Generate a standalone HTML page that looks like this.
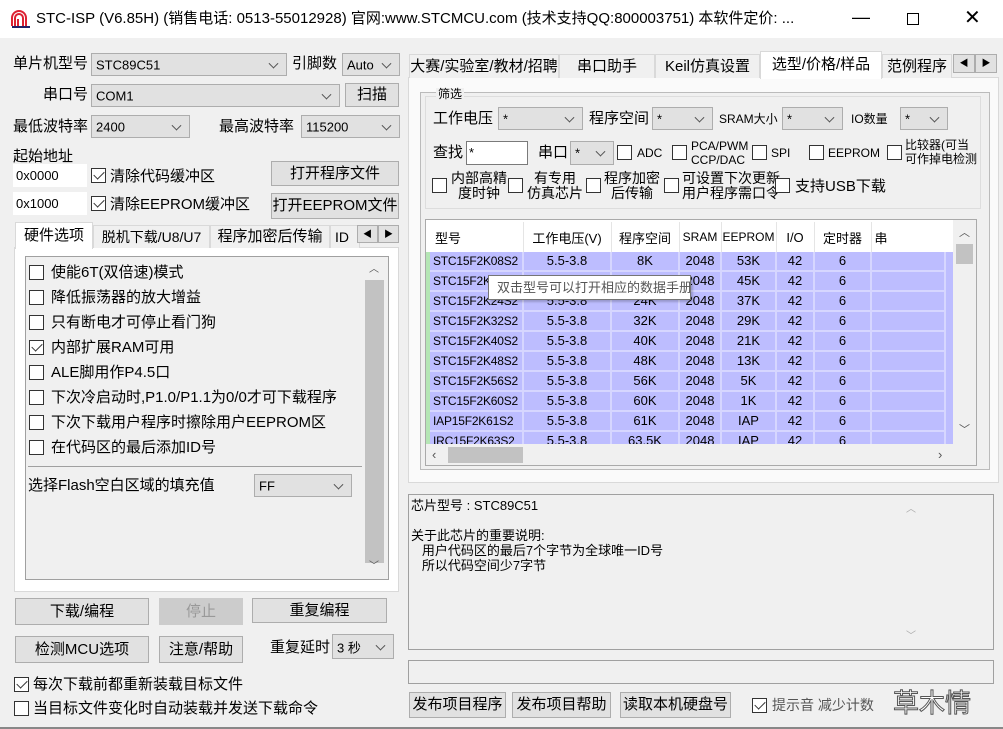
<!DOCTYPE html>
<html><head><meta charset="utf-8"><style>
*{box-sizing:border-box;margin:0;padding:0}
body{width:1003px;height:729px;overflow:hidden;background:#f0f0f0;font-family:"Liberation Sans","Noto Sans CJK SC",sans-serif;font-size:14px;color:#000;position:relative}
.a{position:absolute;white-space:nowrap}
.t{position:absolute;white-space:nowrap;line-height:1;font-size:15px}
.cb{position:absolute;background:#e1e1e1;border:1px solid #adadad}
.cb::after{content:"";position:absolute;right:9px;top:50%;width:6px;height:6px;border-right:1px solid #555;border-bottom:1px solid #555;transform:translateY(-70%) rotate(45deg)}
.cb span{position:absolute;left:4px;top:50%;transform:translateY(-50%);font-size:13px}
.btn{position:absolute;background:#e1e1e1;border:1px solid #adadad;text-align:center;font-size:15px}
.chk{position:absolute;width:15px;height:15px;border:1px solid #333;background:#fff}
.chk.on::after{content:"";position:absolute;left:4px;top:0px;width:5px;height:9px;border-right:1.5px solid #333;border-bottom:1.5px solid #333;transform:rotate(45deg)}
.inp{position:absolute;background:#fff;border:1px solid #7a7a7a;font-size:13px;padding-left:2px}
.tab{position:absolute;border:1px solid #d9d9d9;border-bottom:none;background:#f0f0f0;text-align:center;font-size:14px}
.tab.on{background:#fff}
.sm{font-size:12px}
table{border-collapse:collapse;table-layout:fixed}
td{overflow:hidden;white-space:nowrap}
.rows td{text-align:center;border-right:2px solid #d6d6ff;border-bottom:2px solid #d6d6ff}
.rows td:first-child{text-align:left;padding-left:3px;font-size:12px;letter-spacing:-0.2px}
</style></head><body>
<!-- title -->
<div class="a" style="left:0;top:0;width:1003px;height:38px;background:#fff"></div>
<svg class="a" style="left:11px;top:10px" width="20" height="18" viewBox="0 0 20 18"><path d="M1 16V8a7 7 0 0 1 14 0v8M4 16V8a4 4 0 0 1 8 0v8M7 16V9" stroke="#d23" stroke-width="2" fill="none"/><path d="M1 17h18" stroke="#226" stroke-width="2"/></svg>
<div class="t" style="left:36px;top:11px;font-size:15px">STC-ISP (V6.85H) (销售电话: 0513-55012928) 官网:www.STCMCU.com  (技术支持QQ:800003751) 本软件定价: ...</div>
<div class="t" style="left:852px;top:8px;font-size:18px">—</div>
<div class="a" style="left:907px;top:13px;width:12px;height:12px;border:1px solid #000"></div>
<div class="t" style="left:964px;top:8px;font-size:20px">✕</div>

<!-- left top -->
<div class="t" style="left:13px;top:56px">单片机型号</div>
<div class="cb" style="left:91px;top:53px;width:196px;height:23px"><span>STC89C51</span></div>
<div class="t" style="left:292px;top:56px">引脚数</div>
<div class="cb" style="left:342px;top:53px;width:58px;height:23px"><span>Auto</span></div>
<div class="t" style="left:43px;top:87px">串口号</div>
<div class="cb" style="left:91px;top:84px;width:249px;height:23px"><span>COM1</span></div>
<div class="btn" style="left:345px;top:83px;width:54px;height:24px;line-height:22px">扫描</div>
<div class="t" style="left:13px;top:119px">最低波特率</div>
<div class="cb" style="left:91px;top:115px;width:99px;height:23px"><span>2400</span></div>
<div class="t" style="left:219px;top:119px">最高波特率</div>
<div class="cb" style="left:301px;top:115px;width:99px;height:23px"><span>115200</span></div>
<div class="t" style="left:13px;top:149px">起始地址</div>
<div class="inp" style="left:13px;top:164px;width:74px;height:23px;line-height:21px;border-color:#fff">0x0000</div>
<div class="chk on" style="left:91px;top:168px"></div><div class="t" style="left:110px;top:169px">清除代码缓冲区</div>
<div class="btn" style="left:271px;top:161px;width:128px;height:25px;line-height:23px">打开程序文件</div>
<div class="inp" style="left:13px;top:192px;width:74px;height:23px;line-height:21px;border-color:#fff">0x1000</div>
<div class="chk on" style="left:91px;top:196px"></div><div class="t" style="left:110px;top:197px">清除EEPROM缓冲区</div>
<div class="btn" style="left:271px;top:193px;width:128px;height:26px;line-height:24px">打开EEPROM文件</div>

<!-- left tabs -->
<div class="a" style="left:14px;top:247px;width:385px;height:345px;background:#fff;border:1px solid #d9d9d9"></div>
<div class="tab on" style="left:15px;top:222px;width:78px;height:27px;line-height:26px;font-size:15px">硬件选项</div>
<div class="tab" style="left:93px;top:225px;width:117px;height:23px;line-height:22px">脱机下载/U8/U7</div>
<div class="tab" style="left:210px;top:225px;width:120px;height:23px;line-height:22px;font-size:15px">程序加密后传输</div>
<div class="tab" style="left:330px;top:225px;width:30px;height:23px;line-height:22px;overflow:hidden;text-align:left;padding-left:4px">ID号</div>
<div class="btn" style="left:357px;top:225px;width:21px;height:18px;font-size:9px;line-height:16px">◀</div>
<div class="btn" style="left:378px;top:225px;width:21px;height:18px;font-size:9px;line-height:16px">▶</div>
<div class="a" style="left:25px;top:256px;width:364px;height:324px;background:#f0f0f0;border:1px solid #a0a0a0"></div>
<div class="a" style="left:365px;top:280px;width:19px;height:283px;background:#c2c2c2"></div>
<div class="t" style="left:369px;top:265px;font-size:10px;color:#555">︿</div>
<div class="t" style="left:369px;top:562px;font-size:10px;color:#555">﹀</div>
<div class="chk" style="left:29px;top:265px"></div><div class="t" style="left:51px;top:265px">使能6T(双倍速)模式</div>
<div class="chk" style="left:29px;top:290px"></div><div class="t" style="left:51px;top:290px">降低振荡器的放大增益</div>
<div class="chk" style="left:29px;top:315px"></div><div class="t" style="left:51px;top:315px">只有断电才可停止看门狗</div>
<div class="chk on" style="left:29px;top:340px"></div><div class="t" style="left:51px;top:340px">内部扩展RAM可用</div>
<div class="chk" style="left:29px;top:365px"></div><div class="t" style="left:51px;top:365px">ALE脚用作P4.5口</div>
<div class="chk" style="left:29px;top:390px"></div><div class="t" style="left:51px;top:390px">下次冷启动时,P1.0/P1.1为0/0才可下载程序</div>
<div class="chk" style="left:29px;top:415px"></div><div class="t" style="left:51px;top:415px">下次下载用户程序时擦除用户EEPROM区</div>
<div class="chk" style="left:29px;top:440px"></div><div class="t" style="left:51px;top:440px">在代码区的最后添加ID号</div>
<div class="a" style="left:28px;top:466px;width:334px;height:1px;background:#a0a0a0"></div>
<div class="t" style="left:28px;top:478px">选择Flash空白区域的填充值</div>
<div class="cb" style="left:254px;top:474px;width:98px;height:23px"><span>FF</span></div>

<!-- left buttons -->
<div class="btn" style="left:15px;top:598px;width:134px;height:27px;line-height:25px">下载/编程</div>
<div class="btn" style="left:159px;top:598px;width:84px;height:27px;line-height:25px;background:#ccc;border-color:#ccc;color:#999">停止</div>
<div class="btn" style="left:252px;top:598px;width:135px;height:25px;line-height:23px">重复编程</div>
<div class="btn" style="left:15px;top:636px;width:134px;height:27px;line-height:25px">检测MCU选项</div>
<div class="btn" style="left:159px;top:636px;width:84px;height:27px;line-height:25px">注意/帮助</div>
<div class="t" style="left:270px;top:640px">重复延时</div>
<div class="cb" style="left:332px;top:634px;width:62px;height:25px"><span>3 秒</span></div>
<div class="chk on" style="left:14px;top:677px"></div><div class="t" style="left:33px;top:677px">每次下载前都重新装载目标文件</div>
<div class="chk" style="left:14px;top:701px"></div><div class="t" style="left:33px;top:701px">当目标文件变化时自动装载并发送下载命令</div>

<!-- right tabs -->
<div class="a" style="left:408px;top:77px;width:591px;height:406px;background:#fafafa;border:1px solid #d9d9d9"></div>
<div class="tab" style="left:409px;top:54px;width:150px;height:24px;line-height:24px;font-size:15px">大赛/实验室/教材/招聘</div>
<div class="tab" style="left:559px;top:54px;width:96px;height:24px;line-height:24px;font-size:15px">串口助手</div>
<div class="tab" style="left:655px;top:54px;width:105px;height:24px;line-height:24px;font-size:15px">Keil仿真设置</div>
<div class="tab on" style="left:760px;top:51px;width:122px;height:28px;line-height:26px;font-size:15px">选型/价格/样品</div>
<div class="tab" style="left:882px;top:54px;width:70px;height:24px;line-height:24px;font-size:15px;overflow:hidden">范例程序</div>
<div class="btn" style="left:953px;top:54px;width:22px;height:19px;font-size:9px;line-height:17px">◀</div>
<div class="btn" style="left:975px;top:54px;width:22px;height:19px;font-size:9px;line-height:17px">▶</div>
<div class="a" style="left:420px;top:92px;width:570px;height:378px;border:1px solid #bbb;background:#f0f0f0"></div>
<div class="a" style="left:425px;top:96px;width:556px;height:113px;border:1px solid #ddd"></div>
<div class="t" style="left:436px;top:88px;font-size:12px;background:#f0f0f0;padding:0 2px">筛选</div>
<div class="t" style="left:433px;top:111px;font-size:15px">工作电压</div>
<div class="cb" style="left:498px;top:107px;width:85px;height:23px"><span>*</span></div>
<div class="t" style="left:589px;top:111px;font-size:15px">程序空间</div>
<div class="cb" style="left:652px;top:107px;width:61px;height:23px"><span>*</span></div>
<div class="t sm" style="left:719px;top:113px;font-size:12px">SRAM大小</div>
<div class="cb" style="left:782px;top:107px;width:61px;height:23px"><span>*</span></div>
<div class="t sm" style="left:851px;top:113px;font-size:12px">IO数量</div>
<div class="cb" style="left:900px;top:107px;width:48px;height:23px"><span>*</span></div>
<div class="t" style="left:433px;top:145px;font-size:15px">查找</div>
<div class="inp" style="left:466px;top:141px;width:62px;height:24px;line-height:22px">*</div>
<div class="t" style="left:538px;top:145px;font-size:15px">串口</div>
<div class="cb" style="left:570px;top:141px;width:44px;height:24px"><span>*</span></div>
<div class="chk" style="left:617px;top:145px"></div><div class="t sm" style="left:637px;top:147px;font-size:12px">ADC</div>
<div class="chk" style="left:672px;top:145px"></div><div class="a sm" style="left:691px;top:139px;line-height:14px">PCA/PWM<br>CCP/DAC</div>
<div class="chk" style="left:752px;top:145px"></div><div class="t sm" style="left:771px;top:147px;font-size:12px">SPI</div>
<div class="chk" style="left:809px;top:145px"></div><div class="t sm" style="left:828px;top:147px;font-size:12px">EEPROM</div>
<div class="chk" style="left:887px;top:145px"></div><div class="a sm" style="left:905px;top:138px;line-height:14px;width:80px;overflow:hidden">比较器(可当<br>可作掉电检测</div>
<div class="chk" style="left:432px;top:178px"></div><div class="a" style="left:451px;top:171px;line-height:15px;text-align:center;font-size:14px">内部高精<br>度时钟</div>
<div class="chk" style="left:508px;top:178px"></div><div class="a" style="left:527px;top:171px;line-height:15px;text-align:center;font-size:14px">有专用<br>仿真芯片</div>
<div class="chk" style="left:586px;top:178px"></div><div class="a" style="left:604px;top:171px;line-height:15px;text-align:center;font-size:14px">程序加密<br>后传输</div>
<div class="chk" style="left:664px;top:178px"></div><div class="a" style="left:682px;top:171px;line-height:15px;text-align:center;font-size:14px">可设置下次更新<br>用户程序需口令</div>
<div class="chk" style="left:775px;top:178px"></div><div class="t" style="left:795px;top:179px">支持USB下载</div>

<!-- list -->
<div class="a" style="left:425px;top:219px;width:552px;height:247px;border:1px solid #aaa;background:#fff;overflow:hidden">
<table style="position:absolute;left:4px;top:2px;font-size:13px;width:515px">
<colgroup><col style="width:93px"><col style="width:88px"><col style="width:68px"><col style="width:42px"><col style="width:55px"><col style="width:38px"><col style="width:57px"><col style="width:74px"></colgroup>
<tr style="height:30px;background:#fff"><td style="padding-left:5px">型号</td><td style="text-align:center;border-left:1px solid #e5e5e5">工作电压(V)</td><td style="text-align:center;border-left:1px solid #e5e5e5">程序空间</td><td style="text-align:center;border-left:1px solid #e5e5e5;font-size:12px">SRAM</td><td style="text-align:center;border-left:1px solid #e5e5e5;font-size:12px">EEPROM</td><td style="text-align:center;border-left:1px solid #e5e5e5">I/O</td><td style="text-align:center;border-left:1px solid #e5e5e5">定时器</td><td style="border-left:1px solid #e5e5e5;padding-left:3px">串</td></tr>
</table>
<div class="a" style="left:4px;top:32px;width:523px;height:192px;background:#bdbdff"></div>
<div class="a" style="left:0;top:32px;width:4px;height:192px;background:#b5e6b5"></div>
<table class="rows" style="position:absolute;left:4px;top:32px;font-size:13px;width:515px;line-height:18px">
<colgroup><col style="width:93px"><col style="width:88px"><col style="width:68px"><col style="width:42px"><col style="width:55px"><col style="width:38px"><col style="width:57px"><col style="width:74px"></colgroup>
<tr><td>STC15F2K08S2</td><td>5.5-3.8</td><td>8K</td><td>2048</td><td>53K</td><td>42</td><td>6</td><td></td></tr>
<tr><td>STC15F2K16S2</td><td>5.5-3.8</td><td>16K</td><td>2048</td><td>45K</td><td>42</td><td>6</td><td></td></tr>
<tr><td>STC15F2K24S2</td><td>5.5-3.8</td><td>24K</td><td>2048</td><td>37K</td><td>42</td><td>6</td><td></td></tr>
<tr><td>STC15F2K32S2</td><td>5.5-3.8</td><td>32K</td><td>2048</td><td>29K</td><td>42</td><td>6</td><td></td></tr>
<tr><td>STC15F2K40S2</td><td>5.5-3.8</td><td>40K</td><td>2048</td><td>21K</td><td>42</td><td>6</td><td></td></tr>
<tr><td>STC15F2K48S2</td><td>5.5-3.8</td><td>48K</td><td>2048</td><td>13K</td><td>42</td><td>6</td><td></td></tr>
<tr><td>STC15F2K56S2</td><td>5.5-3.8</td><td>56K</td><td>2048</td><td>5K</td><td>42</td><td>6</td><td></td></tr>
<tr><td>STC15F2K60S2</td><td>5.5-3.8</td><td>60K</td><td>2048</td><td>1K</td><td>42</td><td>6</td><td></td></tr>
<tr><td>IAP15F2K61S2</td><td>5.5-3.8</td><td>61K</td><td>2048</td><td>IAP</td><td>42</td><td>6</td><td></td></tr>
<tr><td>IRC15F2K63S2</td><td>5.5-3.8</td><td>63.5K</td><td>2048</td><td>IAP</td><td>42</td><td>6</td><td></td></tr>
</table>
<div class="a" style="left:527px;top:0;width:24px;height:224px;background:#f0f0f0"></div>
<div class="a" style="left:530px;top:24px;width:17px;height:20px;background:#c2c2c2"></div>
<div class="t" style="left:533px;top:8px;font-size:11px;color:#555">︿</div>
<div class="t" style="left:533px;top:205px;font-size:11px;color:#555">﹀</div>
<div class="a" style="left:0;top:224px;width:551px;height:22px;background:#f0f0f0"></div>
<div class="a" style="left:22px;top:227px;width:75px;height:16px;background:#c2c2c2"></div>
<div class="t" style="left:6px;top:228px;font-size:13px;color:#555">‹</div>
<div class="t" style="left:512px;top:228px;font-size:13px;color:#555">›</div>
</div>
<div class="a" style="left:488px;top:275px;width:203px;height:25px;background:#fff;border:1px solid #767676;box-shadow:2px 2px 2px rgba(0,0,0,.2);font-size:13px;line-height:23px;padding-left:8px;color:#555;overflow:hidden">双击型号可以打开相应的数据手册</div>

<!-- info -->
<div class="a" style="left:408px;top:494px;width:586px;height:156px;border:1px solid #a0a0a0;background:#f0f0f0"></div>
<div class="a" style="left:411px;top:498px;font-size:13px;line-height:15px;white-space:pre">芯片型号 : STC89C51

关于此芯片的重要说明:
   用户代码区的最后7个字节为全球唯一ID号
   所以代码空间少7字节</div>
<div class="t" style="left:906px;top:505px;font-size:10px;color:#aaa">︿</div>
<div class="t" style="left:906px;top:632px;font-size:10px;color:#aaa">﹀</div>
<div class="a" style="left:408px;top:660px;width:586px;height:24px;border:1px solid #a0a0a0;background:#f0f0f0"></div>
<div class="btn" style="left:409px;top:692px;width:97px;height:26px;line-height:24px">发布项目程序</div>
<div class="btn" style="left:512px;top:692px;width:99px;height:26px;line-height:24px">发布项目帮助</div>
<div class="btn" style="left:620px;top:692px;width:111px;height:26px;line-height:24px">读取本机硬盘号</div>
<div class="chk on" style="left:752px;top:698px"></div>
<div class="t" style="left:772px;top:698px;color:#555;font-size:14px">提示音  减少计数</div>
<div class="t" style="left:893px;top:690px;font-size:26px;color:#fff;-webkit-text-stroke:1px #555">草木情</div>
<div class="a" style="left:0;top:727px;width:1003px;height:2px;background:#888"></div>
</body></html>
